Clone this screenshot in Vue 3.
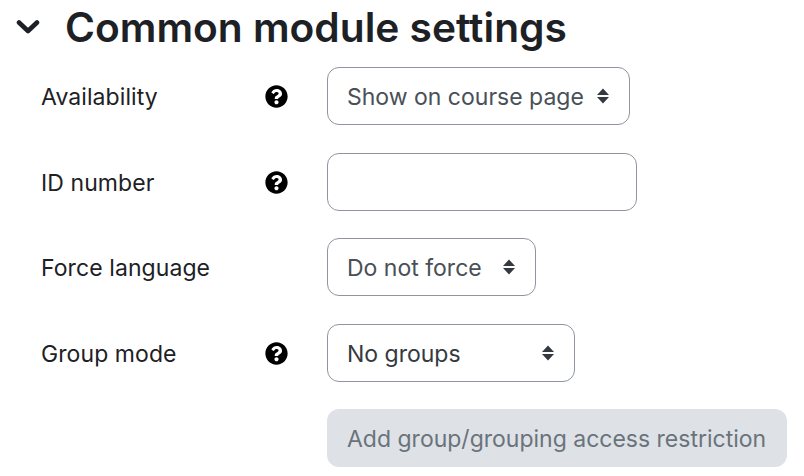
<template>
  <div class="page">
    <div class="heading">
      <svg class="chevron" viewBox="0 0 24 16" width="24" height="16">
        <path d="M3 3.500 L12 12 L21 3.500" fill="none" stroke="#1d2125" stroke-width="4.600" stroke-linecap="round" stroke-linejoin="round" />
      </svg>
      <h3>Common module settings</h3>
    </div>
    <div class="rows">
      <div v-for="row in rows" :key="row.label" class="row">
        <span class="label">{{ row.label }}</span>
        <span class="help">
          <svg v-if="row.help" viewBox="0 0 512 512" width="23" height="23">
            <path fill="#000" d="M504 256c0 137-111 248-248 248S8 393 8 256 119 8 256 8s248 111 248 248zM262.700 90c-54.500 0-89.300 23-116.600 63.800-3.500 5.300-2.400 12.400 2.700 16.300l34.700 26.300c5.200 3.900 12.600 3 16.700-2.100 17.900-22.700 30.100-35.800 57.300-35.800 20.400 0 45.700 13.100 45.700 32.900 0 15-12.400 22.700-32.500 34-23.500 13.200-54.600 29.600-54.600 70.600V300c0 6.600 5.400 12 12 12h56c6.600 0 12-5.400 12-12v-1.300c0-28.400 83-29.600 83-106.700 0-58-60.200-102-116.400-102zM256 338c-25.400 0-46 20.600-46 46 0 25.400 20.600 46 46 46s46-20.600 46-46c0-25.400-20.600-46-46-46z" />
          </svg>
        </span>
        <div v-if="row.type === 'select'" class="select" :style="{ width: row.width + 'px' }">
          <span>{{ row.value }}</span>
          <svg class="updown" viewBox="0 0 14 18" width="14" height="18">
            <path fill="#343a40" d="M7 1.500 L13 8 H1 Z M1 10 H13 L7 16.500 Z" />
          </svg>
        </div>
        <div v-else class="input" :style="{ width: row.width + 'px' }"></div>
      </div>
      <div class="row">
        <span class="label"></span>
        <span class="help"></span>
        <button class="restrict" disabled>Add group/grouping access restriction</button>
      </div>
    </div>
  </div>
</template>

<script setup>
const rows = [
  { label: 'Availability', help: true, type: 'select', value: 'Show on course page', width: 303 },
  { label: 'ID number', help: true, type: 'input', width: 310 },
  { label: 'Force language', help: false, type: 'select', value: 'Do not force', width: 209 },
  { label: 'Group mode', help: true, type: 'select', value: 'No groups', width: 248 }
]
</script>

<style>
body {
  background: #fff;
}
</style>

<style scoped>
.page {
  width: 804px;
  height: 476px;
  overflow: hidden;
  font-family: Inter, "Liberation Sans", sans-serif;
  box-sizing: border-box;
  padding-top: 4px;
}

.heading {
  display: flex;
  align-items: center;
  height: 46px;
  padding-left: 16px;
}

.chevron {
  width: 24px;
  margin-right: 25px;
}

h3 {
  margin: 0;
  font-size: 40.700px;
  font-weight: 600;
  color: #1d2125;
  white-space: nowrap;
}

.rows {
  display: flex;
  flex-direction: column;
  gap: 27.500px;
  margin-top: 17px;
  padding-left: 41px;
}

.row {
  display: flex;
  align-items: center;
  height: 58px;
}

.label {
  width: 225px;
  padding-top: 2px;
  font-size: 23px;
  letter-spacing: 0.08px;
  color: #1d2125;
}

.help {
  display: flex;
  width: 61px;
  margin-left: -1px;
  margin-right: 1px;
  padding-top: 1px;
}

.select,
.input {
  box-sizing: border-box;
  height: 58px;
  border: 1px solid #8f959e;
  border-radius: 12px;
  background: #fff;
}

.select {
  display: flex;
  align-items: center;
  justify-content: space-between;
  padding: 2px 20px 0 19px;
  font-size: 23px;
  color: #495057;
}

.updown {
  margin-right: -1px;
  margin-top: -2px;
}

.row:nth-child(4) .select {
  color: #343a40;
}

.restrict {
  box-sizing: border-box;
  width: 460px;
  height: 58px;
  padding: 2px 20px 0;
  border: 0;
  border-radius: 12px;
  background: #dee2e6;
  font-family: inherit;
  font-size: 23px;
  color: #6a737b;
  text-align: left;
  white-space: nowrap;
}
</style>
